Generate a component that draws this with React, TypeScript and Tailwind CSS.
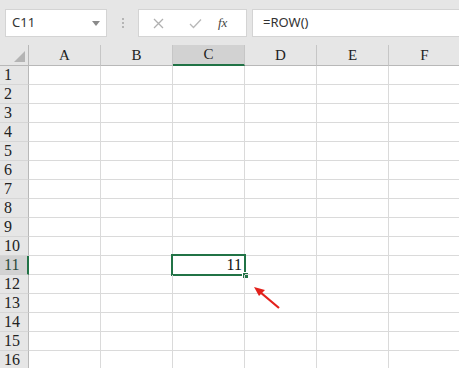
import React from "react";

const cols = ["A", "B", "C", "D", "E", "F"];
const rows = Array.from({ length: 16 }, (_, i) => i + 1);

function Toolbar() {
  return (
    <div className="h-[45px] bg-[#e6e6e6] flex items-center pt-[1px] font-['Noto_Sans','Liberation_Sans',sans-serif]">
      {/* name box */}
      <div className="ml-[5px] w-[102px] h-[28px] bg-white border border-[#d4d4d4] flex items-center pl-[6px] pr-[6px]">
        <span className="text-[13px] text-[#333] flex-1">C11</span>
        <svg width="8" height="5" viewBox="0 0 8 5">
          <path d="M0 0 L8 0 L4 5 Z" fill="#8a8a8a" />
        </svg>
      </div>
      {/* grip dots */}
      <div className="w-[31px] flex flex-col items-center gap-[2px]">
        <div className="w-[2px] h-[2px] bg-[#b5b5b5]" />
        <div className="w-[2px] h-[2px] bg-[#b5b5b5]" />
        <div className="w-[2px] h-[2px] bg-[#b5b5b5]" />
      </div>
      {/* formula buttons */}
      <div className="w-[109px] h-[28px] bg-white border border-[#d4d4d4] flex items-center">
        <svg className="ml-[14px]" width="11" height="11" viewBox="0 0 11 11">
          <path d="M1 1 L10 10 M10 1 L1 10" stroke="#b0b0b0" strokeWidth="1.3" />
        </svg>
        <svg className="ml-[25px]" width="13" height="11" viewBox="0 0 13 11">
          <path d="M1 6 L4.5 9.5 L12 1.5" stroke="#b8b8b8" strokeWidth="1.3" fill="none" />
        </svg>
        <span className="ml-[16px] text-[13px] italic text-[#444] font-['Liberation_Serif',serif]">fx</span>
      </div>
      {/* formula input */}
      <div className="ml-[5px] flex-1 h-[28px] bg-white border border-[#d4d4d4] border-r-0 flex items-center pl-[10px]">
        <span className="text-[13px] text-[#333]">=ROW()</span>
      </div>
    </div>
  );
}

export default function App() {
  return (
    <div className="w-[459px] h-[368px] overflow-hidden bg-white relative">
      <Toolbar />
      {/* column headers */}
      <div className="flex h-[21px] font-['Liberation_Serif',serif] text-[15px] text-[#222]">
        <div className="w-[29px] shrink-0 bg-[#e6e6e6] border-r border-b border-[#b8b8b8] relative">
          <svg className="absolute right-[3px] bottom-[3px]" width="11" height="11" viewBox="0 0 11 11">
            <path d="M11 0 L11 11 L0 11 Z" fill="#b4b4b4" />
          </svg>
        </div>
        {cols.map((c) => (
          <div
            key={c}
            className={
              c === "C"
                ? "w-[72px] shrink-0 bg-[#d2d2d2] border-r border-[#c6c6c6] border-b-2 border-b-[#217346] flex items-center justify-center"
                : "w-[72px] shrink-0 bg-[#e6e6e6] border-r border-b border-[#c6c6c6] border-b-[#b8b8b8] flex items-center justify-center"
            }
          >
            {c}
          </div>
        ))}
      </div>
      {/* rows */}
      {rows.map((r) => (
        <div key={r} className="flex h-[19px]">
          <div
            className={
              r === 11
                ? "w-[29px] shrink-0 bg-[#d2d2d2] border-r-2 border-r-[#217346] border-b border-b-[#cfcfcf] flex items-center pl-[4px] text-[16px] leading-none text-[#2a4a3a] font-['Liberation_Serif',serif]"
                : "w-[29px] shrink-0 bg-[#e6e6e6] border-r border-r-[#b8b8b8] border-b border-b-[#d6d6d6] flex items-center pl-[4px] text-[16px] leading-none text-[#222] font-['Liberation_Serif',serif]"
            }
          >
            {r}
          </div>
          {cols.map((c) => (
            <div key={c} className="w-[72px] shrink-0 border-r border-b border-[#dadada] relative">
              {r === 11 && c === "C" && (
                <div className="absolute left-[-2px] top-[-2px] w-[75px] h-[22px] border-2 border-[#217346] flex items-center justify-end pr-[2px] font-['Liberation_Serif',serif] text-[16px] text-[#111]">
                  11
                  <div className="absolute right-[-5px] bottom-[-5px] w-[7px] h-[7px] bg-[#217346] border border-white" />
                </div>
              )}
            </div>
          ))}
        </div>
      ))}
      {/* red arrow annotation */}
      <svg className="absolute left-0 top-0 pointer-events-none" width="459" height="368">
        <line x1="279" y1="308" x2="260" y2="292" stroke="#e3211b" strokeWidth="2.2" />
        <path d="M254 287 L265 290 L259 296 Z" fill="#e3211b" />
      </svg>
    </div>
  );
}
